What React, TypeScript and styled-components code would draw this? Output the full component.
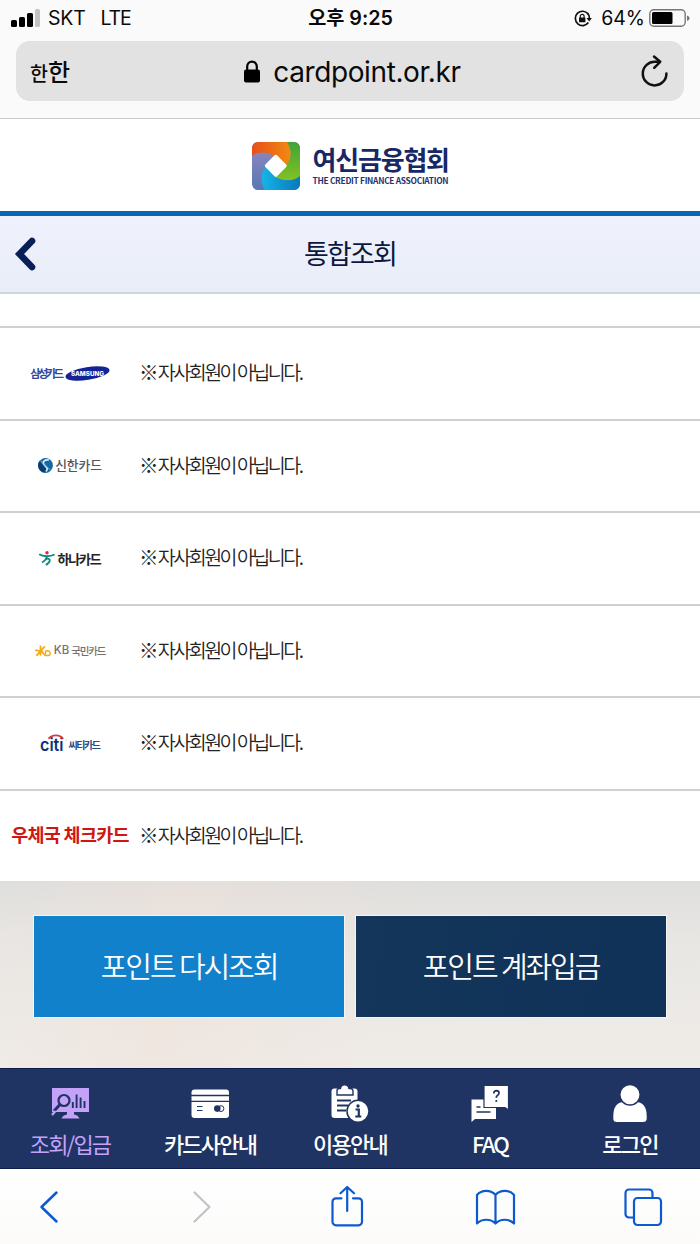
import React from "react";
import styled, { createGlobalStyle } from "styled-components";

const GlobalStyle = createGlobalStyle`
  * { box-sizing: border-box; }
  body { margin: 0; background: #fff; }
  svg { display: block; overflow: visible; }
`;

const korean = `"Noto Sans CJK KR", sans-serif`;
const system = `Inter, "Noto Sans CJK KR", sans-serif`;

const Screen = styled.div`
  width: 700px;
  height: 1244px;
  display: flex;
  flex-direction: column;
  overflow: hidden;
  background: #fff;
  font-family: ${korean};
`;

const Label = styled.span<{
  $size: number;
  $spacing?: number;
  $weight?: number;
  $color?: string;
  $system?: boolean;
}>`
  font-family: ${(p) => (p.$system ? system : korean)};
  font-size: ${(p) => p.$size}px;
  letter-spacing: ${(p) => p.$spacing ?? 0}px;
  font-weight: ${(p) => p.$weight ?? 400};
  color: ${(p) => p.$color ?? "#0a0a0a"};
  line-height: 1;
  white-space: pre;
`;

const BrowserTop = styled.div`
  height: 119px;
  flex: none;
  background: #fafafa;
  border-bottom: 1px solid #c9c9c9;
`;

const StatusBar = styled.div`
  height: 41px;
  display: grid;
  grid-template-columns: 1fr auto 1fr;
  align-items: center;
  padding: 0 10px 5px 11px;
`;

const StatusGroup = styled.div<{ $end?: boolean }>`
  display: flex;
  align-items: center;
  justify-content: ${(p) => (p.$end ? "flex-end" : "flex-start")};
`;

const Clock = styled.div`
  display: flex;
  padding-top: 2px;
`;

const Carrier = styled.div`
  display: flex;
  gap: 15px;
  margin-left: 8px;
  padding-top: 1px;
`;

const Percent = styled.div`
  display: flex;
  margin: 0 4px 0 9px;
  padding-top: 1px;
`;

const AddressBar = styled.div`
  height: 60px;
  margin: 0 16px;
  padding: 0 16px 0 14px;
  border-radius: 14px;
  background: #e2e2e3;
  display: grid;
  grid-template-columns: 1fr auto 1fr;
  align-items: center;
`;

const TextSize = styled.div`
  display: flex;
  align-items: baseline;
`;

const Address = styled.div`
  display: flex;
  align-items: center;
  gap: 13px;
  padding: 1px 0 0 7px;
`;

const Reload = styled.div`
  justify-self: end;
`;

const Brand = styled.header`
  height: 97px;
  flex: none;
  border-bottom: 5px solid #0868b4;
  display: flex;
  justify-content: center;
  align-items: center;
  gap: 13px;
  padding-top: 1px;
`;

const BrandName = styled.div`
  display: flex;
  flex-direction: column;
  gap: 4px;
  width: 136px;
  padding-bottom: 1px;
`;

const TitleBar = styled.div`
  height: 78px;
  flex: none;
  display: grid;
  grid-template-columns: 1fr auto 1fr;
  align-items: center;
  padding: 0 14px;
  background: linear-gradient(#eff2fc, #e9edf8);
  border-bottom: 2px solid #ccd6de;
`;

const Title = styled.h1`
  display: flex;
  margin: 0;
  padding-bottom: 4px;
`;

const ListGap = styled.div`
  height: 32px;
  flex: none;
`;

const CardRow = styled.div`
  height: 92.5px;
  flex: none;
  border-top: 2px solid #d0d0d0;
  display: grid;
  grid-template-columns: 139px 1fr;
  align-items: center;
`;

const CardLogo = styled.div<{ $gap?: number }>`
  display: flex;
  justify-content: center;
  align-items: center;
  gap: ${(p) => p.$gap ?? 2}px;
  padding-left: 1px;
`;

const Message = styled.div`
  display: flex;
  padding-bottom: 3px;
`;

const Actions = styled.div`
  height: 187px;
  flex: none;
  display: flex;
  gap: 12px;
  padding: 35px 34px 0;
  background: linear-gradient(100deg, rgba(237, 224, 217, 0) 0%, rgba(240, 225, 217, 0.5) 25%, rgba(237, 230, 224, 0) 60%),
    linear-gradient(#dededd, #e8e6e3 30%, #efece8);
`;

const ActionButton = styled.button<{ $dark?: boolean }>`
  flex: 1;
  height: 101px;
  border: 0;
  padding: 0 0 2px;
  display: flex;
  align-items: center;
  justify-content: center;
  background: ${(p) => (p.$dark ? "linear-gradient(100deg, #13365a, #103158)" : "#1181cc")};
  box-shadow: 0 0 0 1px #f7f3ef;
`;

const Tabs = styled.nav`
  height: 101px;
  flex: none;
  display: grid;
  grid-template-columns: repeat(5, 1fr);
  background: #203463;
  border-top: 1px solid #0c1c48;
  border-bottom: 1px solid #0c1c48;
`;

const Tab = styled.div`
  display: flex;
  flex-direction: column;
  align-items: center;
  padding-top: 15px;
  gap: 10px;
`;

const BrowserBottom = styled.div`
  flex: 1;
  display: flex;
  justify-content: space-between;
  padding: 17px 37px 0 29px;
  background: linear-gradient(#fff, #fcfbfa);
`;

const Signal = () => (
  <svg width="29" height="18" viewBox="0 0 29 18">
    <rect x="0" y="11" width="6" height="7" rx="1.5" />
    <rect x="8" y="8" width="6" height="10" rx="1.5" />
    <rect x="16" y="4" width="6" height="14" rx="1.5" />
    <rect x="24" y="0" width="5" height="18" rx="1.5" fill="#c4c4c4" />
  </svg>
);

const RotationLock = () => (
  <svg width="18" height="17" viewBox="0 0 18 17" fill="none" stroke="#111" strokeWidth="1.7">
    <path d="M14.2 4A7.2 7.2 0 1 0 14.4 12.6" />
    <path d="M13.400 3.200a7 7 0 0 1 2 5" />
    <path d="M12.500 8h5.400l-2.700 3.500z" fill="#111" stroke="none" />
    <rect x="5" y="7.500" width="6.400" height="4.800" rx=".6" fill="#111" stroke="none" />
    <path d="M6.300 8V6.200a1.900 1.900 0 0 1 3.800 0V8" strokeWidth="1.200" />
  </svg>
);

const Battery = () => (
  <svg width="41" height="18" viewBox="0 0 41 18">
    <rect x=".8" y=".8" width="35.4" height="16.4" rx="4" fill="none" stroke="#777" strokeWidth="1.4" />
    <rect x="3" y="3" width="20.5" height="12" rx="1.5" />
    <path d="M38 6.400q2.500.5 2.500 2.800T38 12z" fill="#777" />
  </svg>
);

const Padlock = () => (
  <svg width="16" height="23" viewBox="0 0 16 23">
    <rect y="9.5" width="16" height="13" rx="2" />
    <path d="M3.200 11V6.600a4.800 5 0 0 1 9.600 0V11" fill="none" stroke="#000" strokeWidth="2.2" />
  </svg>
);

const ReloadIcon = () => (
  <svg width="27" height="32" viewBox="0 0 27 32" fill="none" stroke="#111" strokeWidth="2.5" strokeLinecap="round" strokeLinejoin="round">
    <path d="M18.500 6.800h-4.200A11.800 11.800 0 1 0 25.400 18.400" />
    <path d="M13 1.500l6.200 5.300-6 6.100" />
  </svg>
);

const BrandMark = () => (
  <svg width="48" height="48" viewBox="0 0 48 48">
    <defs>
      <clipPath id="mark"><rect width="48" height="48" rx="6" /></clipPath>
      <linearGradient id="orange"><stop stopColor="#e84e1b" /><stop offset="1" stopColor="#f18a10" /></linearGradient>
      <linearGradient id="green" x2="0" y2="1"><stop stopColor="#3fa435" /><stop offset="1" stopColor="#83c126" /></linearGradient>
      <linearGradient id="blue"><stop stopColor="#16b5e6" /><stop offset="1" stopColor="#0878bd" /></linearGradient>
      <linearGradient id="violet" x2="0" y2="1"><stop stopColor="#9688bd" /><stop offset="1" stopColor="#5578b6" /></linearGradient>
    </defs>
    <g clipPath="url(#mark)">
      <rect width="48" height="48" fill="url(#violet)" />
      <path d="M0 0H35C40 8 40 16 35 24L22 16L20 13C12 9 5 10 0 14z" fill="url(#orange)" />
      <path d="M35 0H48V35C41 40 31 39 22 35L35 22C40 16 40 8 35 0z" fill="url(#green)" />
      <path d="M13 48C8 39 9 30 14 24L23 35C31 39 41 40 48 34V48z" fill="url(#blue)" />
      <rect x="15.500" y="15.500" width="16.500" height="16.500" rx="1.800" transform="rotate(45 23.750 23.750)" fill="#fff" />
    </g>
  </svg>
);

const BackChevron = () => (
  <svg width="22" height="34" viewBox="0 0 22 34" fill="none" stroke="#081f57" strokeWidth="6.6" strokeLinecap="round" strokeLinejoin="miter">
    <path d="M18 4L5.500 17 18 30" />
  </svg>
);

const SamsungMark = () => (
  <svg width="45" height="17" viewBox="0 0 45 17">
    <ellipse cx="22.5" cy="8.5" rx="22.3" ry="6.4" transform="rotate(-9 22.5 8.5)" fill="#142496" />
    <text x="6" y="11" fill="#fff" fontFamily="Inter, sans-serif" fontWeight="800" fontSize="6.5" textLength="33" lengthAdjust="spacingAndGlyphs">SAMSUNG</text>
  </svg>
);

const ShinhanMark = () => (
  <svg width="15" height="15" viewBox="0 0 15 15">
    <circle cx="7.5" cy="7.5" r="7.4" fill="#1767a0" />
    <path d="M1.500 3A7.400 7.400 0 0 0 6 14.600L9 12z" fill="#0d3d74" />
    <path d="M11 2C7 1 4 4 6 6.500S11 10 8 13.500" fill="none" stroke="#d8ecf5" strokeWidth="1.7" />
    <path d="M3 2.500C3.500 6 9 8.500 12.500 12" fill="none" stroke="#69b6dc" strokeWidth="1" />
  </svg>
);

const HanaMark = () => (
  <svg width="16" height="15" viewBox="0 0 16 15" fill="none" stroke="#098b82" strokeWidth="1.9">
    <circle cx="8" cy="1.8" r="1.7" fill="#d42b48" stroke="none" />
    <path d="M.2 3.300C4 5.800 11 5.800 15.600 3.500" />
    <path d="M7.800 5.300C7.600 8 6 10 3 11.500M6.500 8.500C9.500 6.500 11.500 8.500 10.500 10.500S8 13 7 14" />
  </svg>
);

const KbMark = () => (
  <svg width="17" height="12" viewBox="0 0 17 12" fill="none" stroke="#f5ab16" strokeWidth="1.8">
    <path d="M5.500.5v10M.2 5.200l8 1.400M1.300 10.800L9.700 1.400M5.500 5.500l4.800 5" />
    <path d="M10.500 5.500v5h3q2.500-.8 1.500-3T11 6" strokeWidth="1.4" />
  </svg>
);

const CitiMark = () => (
  <svg width="27" height="17" viewBox="0 0 27 17">
    <text x="0" y="16" fill="#0b3478" fontFamily="Inter, sans-serif" fontWeight="600" fontSize="17.5" textLength="23.5" lengthAdjust="spacingAndGlyphs">citi</text>
    <path d="M8.500 3.700C12-.7 20-.7 23.200 3.700" fill="none" stroke="#d63c3f" strokeWidth="1.8" />
    <circle cx="26" cy="5" r=".5" fill="#c88" />
  </svg>
);

const CitiName = styled.div`
  display: flex;
  padding-top: 4px;
`;

const MonitorIcon = () => (
  <svg width="40" height="38" viewBox="0 0 40 38">
    <path d="M2 4H39V28H2z" fill="#c4a2fa" />
    <path d="M17 28h7v2.500q4 .4 5.500 4h-18q1.500-3.600 5.500-4z" fill="#c4a2fa" />
    <g fill="none" stroke="#203463" strokeWidth="2.2">
      <circle cx="14" cy="16.500" r="5.500" fill="#c4a2fa" />
      <path d="M10 20.500L4 27" strokeWidth="3" />
      <path d="M22.800 18v6M26.600 10.500V24M30.600 13.500V24M34.500 17v7" strokeWidth="1.900" />
    </g>
    <path d="M2 31l3.500-4" stroke="#c4a2fa" strokeWidth="2.200" />
  </svg>
);

const CreditCardIcon = () => (
  <svg width="40" height="38" viewBox="0 0 40 38">
    <rect x="1.500" y="5.500" width="37.500" height="28.500" rx="3" fill="#fff" />
    <g stroke="#203463" fill="none">
      <path d="M1 11.500h38M1 17.300h38" strokeWidth="1.300" />
      <path d="M7 22.500h5.500M7 26.500h5.500" strokeWidth="1.200" />
      <circle cx="31" cy="24.600" r="2.900" strokeWidth="1" />
    </g>
    <circle cx="27.300" cy="24.600" r="3.300" fill="#203463" />
  </svg>
);

const ClipboardIcon = () => (
  <svg width="40" height="38" viewBox="0 0 40 38">
    <rect x="1.500" y="4.500" width="26" height="29.500" rx="3" fill="#fff" />
    <path d="M7 7Q7 4.500 9 4.500h1.500C11-.5 18-.5 19 4.500h2Q23 5 23 7v4H7z" fill="#fff" stroke="#203463" strokeWidth="1.400" />
    <path d="M7 16.500h14M7 21.500h11M7 26.500h9" stroke="#203463" strokeWidth="2.200" />
    <circle cx="28" cy="27.300" r="11" fill="#fff" stroke="#203463" strokeWidth="1.500" />
    <circle cx="28" cy="22" r="1.700" fill="#203463" />
    <path d="M25.500 25.500h3.300v7M25.300 32.500h6" stroke="#203463" strokeWidth="2.200" fill="none" />
  </svg>
);

const QuestionIcon = () => (
  <svg width="40" height="38" viewBox="0 0 40 38">
    <path d="M1.500 15.500H26V35H5l-3.500 3z" fill="#fff" />
    <path d="M14 1.500H38.500V26L35 23.500H14z" fill="#fff" stroke="#203463" strokeWidth="1.200" />
    <path d="M6.500 23h4M6.500 28h14" stroke="#203463" strokeWidth="1.700" />
    <path d="M23.800 9.500q.1-2.800 2.700-2.800 2.500.1 2.500 2.300 0 1.500-1.600 2.400-1.200.7-1.100 2.500" fill="none" stroke="#203463" strokeWidth="1.700" />
    <circle cx="26.300" cy="17" r="1.100" fill="#203463" />
  </svg>
);

const PersonIcon = () => (
  <svg width="40" height="38" viewBox="0 0 40 38">
    <path d="M3.300 32C3.300 22 8 18 14 18h12c6 0 10.700 4 10.700 14v2.500Q36.700 38 33 38H7q-3.700 0-3.700-3.500z" fill="#fff" />
    <circle cx="20" cy="10.700" r="10.200" fill="#fff" stroke="#203463" strokeWidth="1.500" />
  </svg>
);

const ToolIcon = styled.svg.attrs({ width: 40, height: 42, viewBox: "0 0 40 42" })<{ $muted?: boolean }>`
  fill: none;
  stroke: ${(p) => (p.$muted ? "#c3c3c3" : "#0c5ad0")};
  stroke-width: 2.2;
  stroke-linecap: round;
  stroke-linejoin: round;
`;

const notMember = "※ 자사회원이 아닙니다.";

const cards: { gap?: number; logo: React.ReactNode }[] = [
  {
    gap: 3,
    logo: <><Label $size={11.2} $spacing={-2.4} $weight={700} $color="#33479f">삼성카드 </Label><SamsungMark /></>,
  },
  { gap: 2, logo: <><ShinhanMark /><Label $size={12.8} $spacing={-0.1} $weight={500} $color="#55555a">신한카드</Label></> },
  { gap: 2, logo: <><HanaMark /><Label $size={13} $spacing={-1.2} $weight={700} $color="#222">하나카드</Label></> },
  {
    gap: 2,
    logo: <><KbMark /><Label $size={11.5} $weight={500} $color="#77706c" $system>KB</Label><Label $size={10.5} $spacing={-1.2} $weight={500} $color="#77706c">국민카드</Label></>,
  },
  { gap: 1, logo: <><CitiMark /><CitiName><Label $size={10} $spacing={-1.4} $weight={700} $color="#274c84">씨티카드</Label></CitiName></> },
  { logo: <Message><Label $size={18.5} $spacing={-0.7} $weight={700} $color="#cf1612">우체국 체크카드</Label></Message> },
];

const tabs = [
  { text: "조회/입금", icon: <MonitorIcon />, color: "#c4a2fa" },
  { text: "카드사안내", icon: <CreditCardIcon /> },
  { text: "이용안내", icon: <ClipboardIcon /> },
  { text: "FAQ", icon: <QuestionIcon /> },
  { text: "로그인", icon: <PersonIcon /> },
];

export default function App() {
  return (
    <Screen>
      <GlobalStyle />
      <BrowserTop>
        <StatusBar>
          <StatusGroup>
            <Signal />
            <Carrier>
              <Label $system $size={19.5} $spacing={-0.2}>SKT</Label>
              <Label $system $size={19.5} $spacing={-1.2}>LTE</Label>
            </Carrier>
          </StatusGroup>
          <Clock><Label $system $size={19.7} $weight={600}>오후 9:25</Label></Clock>
          <StatusGroup $end>
            <RotationLock />
            <Percent><Label $system $size={19.5}>64%</Label></Percent>
            <Battery />
          </StatusGroup>
        </StatusBar>
        <AddressBar>
          <TextSize>
            <Label $size={19.5} $weight={500}>한</Label>
            <Label $size={24} $weight={500}>한</Label>
          </TextSize>
          <Address>
            <Padlock />
            <Label $system $size={28} $spacing={-0.4}>cardpoint.or.kr</Label>
          </Address>
          <Reload><ReloadIcon /></Reload>
        </AddressBar>
      </BrowserTop>

      <Brand>
        <BrandMark />
        <BrandName>
          <Label $size={26} $weight={700} $spacing={-1.2} $color="#182865">여신금융협회</Label>
          <Label $size={8.4} $weight={700} $spacing={-0.3} $color="#263571">THE CREDIT FINANCE ASSOCIATION</Label>
        </BrandName>
      </Brand>

      <TitleBar>
        <BackChevron />
        <Title><Label $size={27} $spacing={-1.9} $color="#0c1840">통합조회</Label></Title>
      </TitleBar>

      <ListGap />
      {cards.map((card, i) => (
        <CardRow key={i}>
          <CardLogo $gap={card.gap}>{card.logo}</CardLogo>
          <Message><Label $size={19.5} $spacing={-2.5} $weight={350} $color="#222">{notMember}</Label></Message>
        </CardRow>
      ))}

      <Actions>
        <ActionButton><Label $size={29} $spacing={-2.1} $weight={350} $color="#fff">포인트 다시조회</Label></ActionButton>
        <ActionButton $dark><Label $size={29} $spacing={-2.1} $weight={350} $color="#fff">포인트 계좌입금</Label></ActionButton>
      </Actions>

      <Tabs>
        {tabs.map((tab) => (
          <Tab key={tab.text}>
            {tab.icon}
            <Label $size={22} $spacing={-1.8} $weight={tab.color ? 400 : 500} $color={tab.color ?? "#fff"}>{tab.text}</Label>
          </Tab>
        ))}
      </Tabs>

      <BrowserBottom>
        <ToolIcon><path d="M27.500 6.500L12.500 21l15 14.500" strokeWidth="2.500" /></ToolIcon>
        <ToolIcon $muted><path d="M16.500 6.500L31.500 21l-15 14.500" /></ToolIcon>
        <ToolIcon>
          <path d="M15.500 12.300H10a3.500 3.500 0 0 0-3.500 3.500v20A3.500 3.500 0 0 0 10 39.300h22.500a3.500 3.500 0 0 0 3.500-3.500v-20a3.500 3.500 0 0 0-3.500-3.500H27M21.200 25V1M14.500 7.200L21.200 1l6.800 6.200" />
        </ToolIcon>
        <ToolIcon>
          <path d="M20.500 9C16 3.500 6.500 3.500 2 9v28.500c5-5 13.500-5 18.500 0 5-5 13.500-5 18.500 0V9C34.500 3.500 25 3.500 20.500 9zM20.500 9v28" />
        </ToolIcon>
        <ToolIcon>
          <rect x="11" y="12" width="27" height="27" rx="3.500" />
          <path d="M11 31.500H6A3.500 3.500 0 0 1 2.500 28V7A3.500 3.500 0 0 1 6 3.500h20A3.500 3.500 0 0 1 29.500 7v5" />
        </ToolIcon>
      </BrowserBottom>
    </Screen>
  );
}
